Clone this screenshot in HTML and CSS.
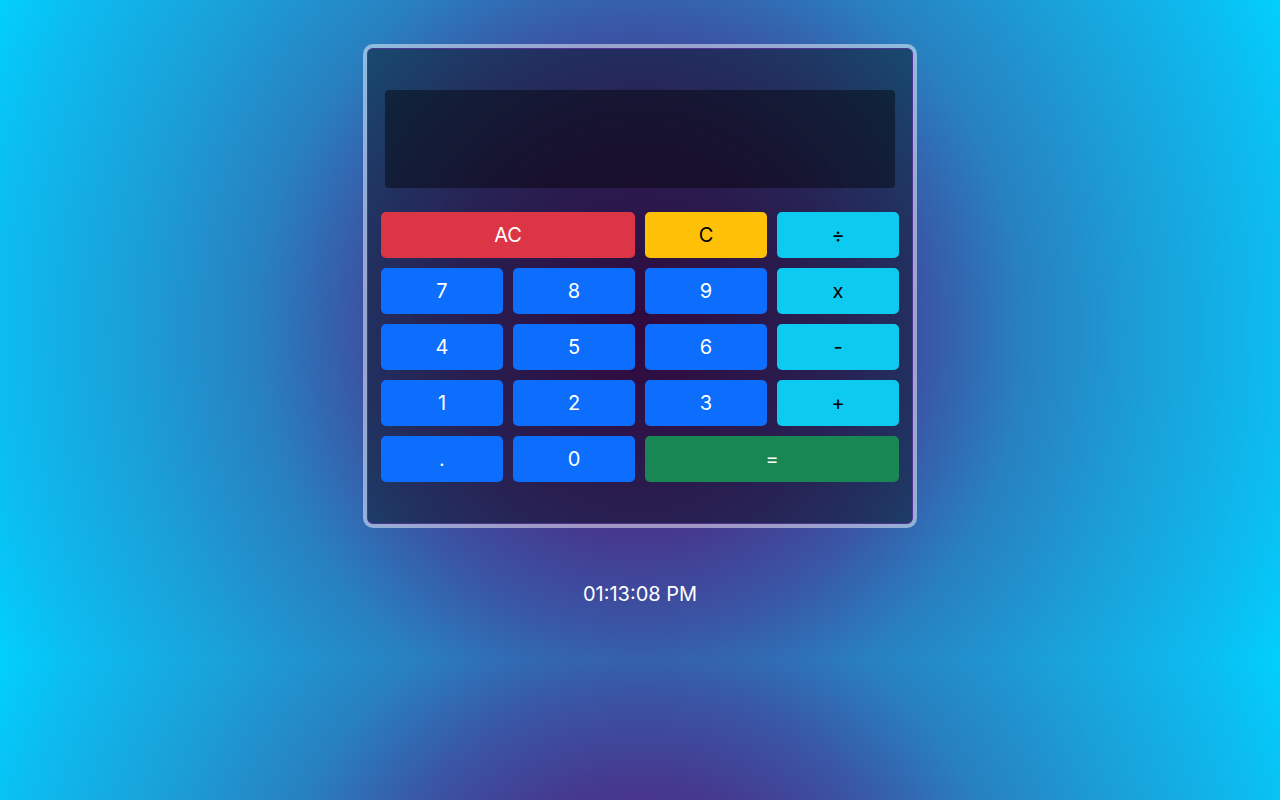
FILE: index.html
```html
<!DOCTYPE html>
<html lang="en">
<head>
<meta charset="utf-8">
<title>Calculator</title>
<link rel="stylesheet" href="styles.css">
</head>
<body>
  <main class="page">
    <section class="calculator">
      <div class="display"></div>
      <div class="keys">
        <button class="key key-danger key-wide">AC</button>
        <button class="key key-warning">C</button>
        <button class="key key-info">÷</button>
        <button class="key key-primary">7</button>
        <button class="key key-primary">8</button>
        <button class="key key-primary">9</button>
        <button class="key key-info">x</button>
        <button class="key key-primary">4</button>
        <button class="key key-primary">5</button>
        <button class="key key-primary">6</button>
        <button class="key key-info">-</button>
        <button class="key key-primary">1</button>
        <button class="key key-primary">2</button>
        <button class="key key-primary">3</button>
        <button class="key key-info">+</button>
        <button class="key key-primary">.</button>
        <button class="key key-primary">0</button>
        <button class="key key-success key-wide">=</button>
      </div>
    </section>
    <p class="clock">01:13:08 PM</p>
  </main>
</body>
</html>
```
FILE: styles.css
```css
html {
  background-color: #00d2ff;
  background-image: radial-gradient(ellipse 720px 767px at 50% 50%, #55106a 0%, #45398f 27%, #3a55a5 39%, #2880c0 53%, #1aa0d8 71%, #0cbcf0 89%, #00d2ff 100%);
  background-size: 100% 660px;
  background-repeat: repeat;
}

body {
  margin: 0;
  font-family: Inter, "Noto Sans", "Liberation Sans", sans-serif;
  color: #fff;
}

.page {
  display: flex;
  flex-direction: column;
  align-items: center;
  padding-top: 44px;
}

.calculator {
  box-sizing: border-box;
  width: 554px;
  height: 484px;
  border: 4px solid rgba(255, 255, 255, 0.48);
  border-radius: 10px;
  background: rgba(0, 0, 0, 0.42);
  background-clip: padding-box;
  box-shadow: inset 0 0 0 1px rgba(85, 50, 150, 0.9);
  padding: 42px 14px 0;
  display: flex;
  flex-direction: column;
  align-items: center;
}

.display {
  width: 510px;
  height: 98px;
  border-radius: 4px;
  background: rgba(0, 0, 0, 0.42);
}

.keys {
  margin-top: 24px;
  display: grid;
  grid-template-columns: repeat(4, 122px);
  grid-auto-rows: 46px;
  gap: 10px;
}

.key {
  border: 0;
  border-radius: 5px;
  font-family: inherit;
  font-size: 20px;
  padding: 0;
  color: #fff;
}

.key-wide { grid-column: span 2; }
.key-primary { background: #0d6efd; }
.key-danger { background: #dc3545; }
.key-success { background: #198754; }
.key-warning { background: #ffc107; color: #000; }
.key-info { background: #0dcaf0; color: #000; }

.clock {
  margin: 54px 0 0;
  font-size: 20px;
  line-height: 24px;
}
```
